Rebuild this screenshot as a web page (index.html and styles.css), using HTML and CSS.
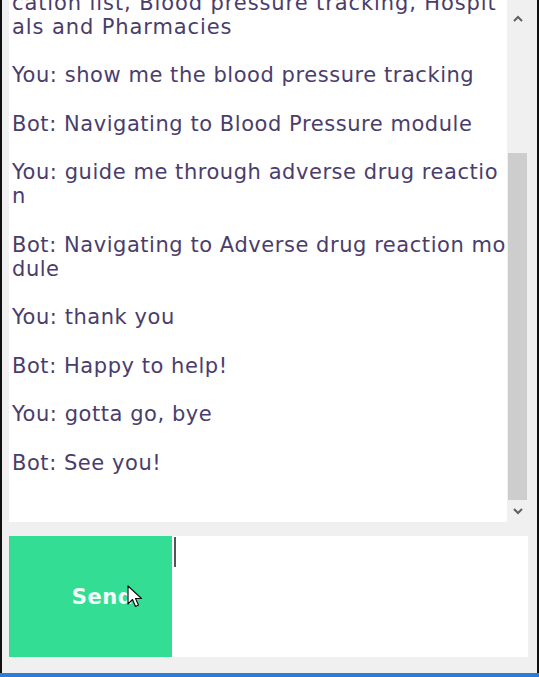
FILE: index.html
```html
<!DOCTYPE html>
<html>
<head>
<meta charset="utf-8">
<link rel="stylesheet" href="styles.css">
</head>
<body>
<div class="frame">
  <div class="chat">
    <div class="messages">
      <p class="intro">Bot: I can show you modules, such as Medication list, Blood pressure tracking, Hospitals and Pharmacies</p>
      <p>You: show me the blood pressure tracking</p>
      <p>Bot: Navigating to Blood Pressure module</p>
      <p>You: guide me through adverse drug reaction</p>
      <p>Bot: Navigating to Adverse drug reaction module</p>
      <p>You: thank you</p>
      <p>Bot: Happy to help!</p>
      <p>You: gotta go, bye</p>
      <p>Bot: See you!</p>
    </div>
    <div class="scrollbar">
      <div class="arrow-box top"><svg width="10" height="7" viewBox="0 0 10 7"><path d="M1 6 L5 2 L9 6" fill="none" stroke="#606060" stroke-width="2"/></svg></div>
      <div class="track"><div class="thumb"></div></div>
      <div class="arrow-box bottom"><svg width="10" height="7" viewBox="0 0 10 7"><path d="M1 1 L5 5 L9 1" fill="none" stroke="#606060" stroke-width="2"/></svg></div>
    </div>
  </div>
  <div class="composer">
    <button class="send">Send</button>
    <div class="input"><span class="caret"></span></div>
    <svg class="pointer" width="16" height="24" viewBox="0 0 16 24"><path d="M1 1 L1 19 L5.5 14.5 L8.5 21.5 L11.5 20 L8.5 13.5 L14.5 13.5 Z" fill="#fff" stroke="#111" stroke-width="1.2" stroke-linejoin="round"/></svg>
  </div>
</div>
<div class="taskbar"></div>
</body>
</html>
```

FILE: styles.css
```css
html, body {
  margin: 0;
  padding: 0;
  background: #f0f0f0;
}

.frame {
  height: 673px;
  box-sizing: border-box;
  border-left: 2px solid #111;
  border-right: 2px solid #111;
  padding: 0 8px 0 7px;
  display: flex;
  flex-direction: column;
}

.chat {
  height: 522px;
  display: flex;
  flex-shrink: 0;
}

.messages {
  flex: 1;
  background: #fff;
  overflow: hidden;
  display: flex;
  flex-direction: column;
  justify-content: flex-end;
  padding: 0 0 0 3px;
  font-family: "DejaVu Sans", Verdana, sans-serif;
  font-size: 21px;
  letter-spacing: 0.55px;
  line-height: 24px;
  color: #4a3d6c;
  word-break: break-all;
}

.messages p {
  margin: 24.5px 0 0;
}

.messages .intro {
  letter-spacing: 0.9px;
}

.messages p:last-child {
  margin-bottom: 47.5px;
}

.scrollbar {
  width: 22px;
  background: #f0f0f0;
  display: flex;
  flex-direction: column;
}

.arrow-box {
  display: flex;
  justify-content: center;
  align-items: center;
  flex-shrink: 0;
}

.arrow-box.top {
  height: 36px;
}

.arrow-box.bottom {
  height: 22px;
}

.track {
  flex: 1;
  display: flex;
  flex-direction: column;
  justify-content: flex-end;
  padding: 0 2px 0 1px;
}

.thumb {
  height: 347px;
  background: #cdcdcd;
}

.composer {
  margin-top: 14px;
  height: 121px;
  display: flex;
  position: relative;
  margin-right: 1px;
}

.send {
  width: 163px;
  border: none;
  background: #33de94;
  color: #f4fff9;
  font-family: "DejaVu Sans", Verdana, sans-serif;
  font-weight: bold;
  font-size: 21px;
  letter-spacing: 0.5px;
  padding: 0 0 0 24px;
  margin: 0;
}

.input {
  flex: 1;
  background: #fff;
  position: relative;
}

.caret {
  position: absolute;
  left: 2px;
  top: 1px;
  width: 2px;
  height: 30px;
  background: #555;
}

.pointer {
  position: absolute;
  left: 118px;
  top: 49px;
}

.taskbar {
  height: 4px;
  background: #2a7ed3;
}
```
